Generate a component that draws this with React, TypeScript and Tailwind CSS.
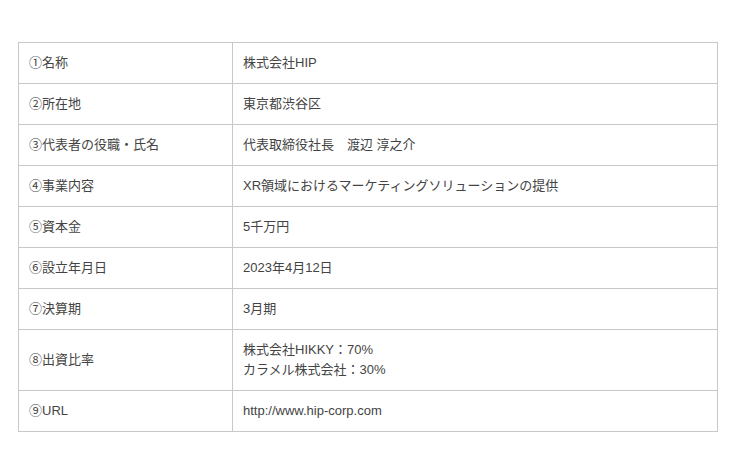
import React from "react";

const rows: [string, string[]][] = [
  ["①名称", ["株式会社HIP"]],
  ["②所在地", ["東京都渋谷区"]],
  ["③代表者の役職・氏名", ["代表取締役社長　渡辺 淳之介"]],
  ["④事業内容", ["XR領域におけるマーケティングソリューションの提供"]],
  ["⑤資本金", ["5千万円"]],
  ["⑥設立年月日", ["2023年4月12日"]],
  ["⑦決算期", ["3月期"]],
  ["⑧出資比率", ["株式会社HIKKY：70%", "カラメル株式会社：30%"]],
  ["⑨URL", ["http://www.hip-corp.com"]],
];

export default function App() {
  return (
    <div
      className="w-[740px] h-[472px] bg-white pt-[42px] pl-[18px]"
      style={{ fontFamily: '"Liberation Sans", "Noto Sans CJK JP", sans-serif' }}
    >
      <table className="w-[700px] border-collapse text-[13px] leading-[20px] text-[#444444]">
        <tbody>
          {rows.map(([k, v]) => (
            <tr key={k}>
              <td className="w-[214px] border border-[#c8c8c8] px-[10px] py-[10px] align-middle">{k}</td>
              <td className="border border-[#c8c8c8] px-[10px] py-[10px] align-middle">
                {v.map((line) => (
                  <div key={line}>{line}</div>
                ))}
              </td>
            </tr>
          ))}
        </tbody>
      </table>
    </div>
  );
}
